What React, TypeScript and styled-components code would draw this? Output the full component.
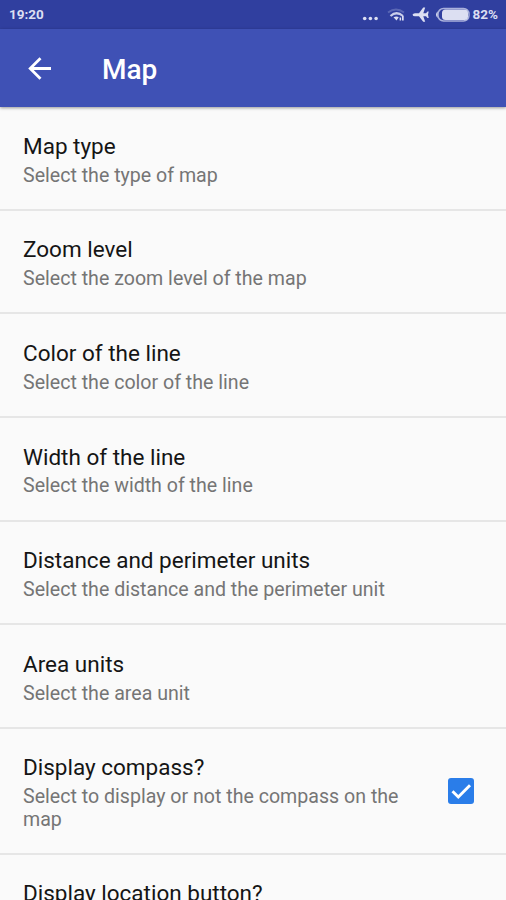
import React from "react";
import styled, { createGlobalStyle } from "styled-components";

const GlobalStyle = createGlobalStyle`
  html, body { margin: 0; height: 100%; overflow: hidden; background: #fafafa; }
  * { box-sizing: border-box; }
`;

const Screen = styled.div`
  width: 506px;
  height: 900px;
  overflow: hidden;
  display: flex;
  flex-direction: column;
  background: #fafafa;
  font-family: Roboto, "Noto Sans", sans-serif;
`;

const StatusBar = styled.div`
  flex: none;
  height: 28.5px;
  padding: 0 8px 0 9px;
  display: flex;
  align-items: center;
  justify-content: space-between;
  background: #303f9f;
  color: #dcdff2;
  font-size: 13.5px;
  font-weight: 700;
`;

const StatusIcons = styled.div`
  display: flex;
  align-items: center;
  gap: 3px;
`;

const AppBar = styled.header`
  flex: none;
  height: 78.5px;
  padding: 2px 22px 0 27px;
  display: flex;
  align-items: center;
  gap: 50px;
  background: #3f51b5;
  box-shadow: 0 1px 3px rgba(0, 0, 0, 0.4);
  z-index: 1;
`;

const BackButton = styled.button`
  border: 0;
  padding: 0;
  width: 25px;
  height: 26px;
  background: none;
  display: flex;
`;

const Heading = styled.h1`
  margin: 2px 0 0;
  color: #fff;
  font-size: 28px;
  line-height: 34px;
  font-weight: 500;
`;

const List = styled.main`
  flex: none;
  padding-top: 0.3px;
`;

const Row = styled.div<{ $tall?: boolean }>`
  height: ${(p) => (p.$tall ? "126px" : "103.6px")};
  padding: 25.5px 32px 0 23px;
  display: flex;
  justify-content: space-between;
  border-bottom: 2px solid #e6e6e6;
`;

const RowText = styled.div`
  width: 395px;
`;

const Title = styled.div`
  color: #151515;
  font-size: 22.5px;
  line-height: 27px;
`;

const Summary = styled.div`
  margin-top: 3.9px;
  color: #757575;
  font-size: 19.6px;
  line-height: 23px;
`;

const Checkbox = styled.div`
  flex: none;
  margin-top: 24px;
  width: 26px;
  height: 26px;
  border-radius: 3px;
  background: #2a7de9;
  display: flex;
`;

const rows = [
  ["Map type", "Select the type of map"],
  ["Zoom level", "Select the zoom level of the map"],
  ["Color of the line", "Select the color of the line"],
  ["Width of the line", "Select the width of the line"],
  ["Distance and perimeter units", "Select the distance and the perimeter unit"],
  ["Area units", "Select the area unit"],
];

function Indicators() {
  return (
    <svg width="108" height="20" viewBox="0 0 108 20" fill="#dcdff2">
      <circle cx="2.7" cy="14.5" r="1.8" />
      <circle cx="8.4" cy="14.5" r="1.8" />
      <circle cx="14.1" cy="14.5" r="1.8" />
      <g fill="none" strokeWidth="1.8">
        <path d="M26 8.5Q34 2.5 42 8.5" stroke="#5a67b4" />
        <path d="M28.5 12Q34.5 6.5 41 12" stroke="#c9ceea" strokeWidth="2.2" />
      </g>
      <path d="M31.5 13.3Q34.5 11.5 36.8 13.3L34.500 16.500z" />
      <path d="M37.6 13.500h1.500v3H37.600zM40 12h1.700v4.500h-1.700z" />
      <path d="M50.5 10.800Q51 9.300 53 9.300H57L61.200 3.500H63.200L61.300 9.300H64L65.500 7.500H66.700L66 10.800L66.700 14H65.500L64 12.300H61.300L63.200 17.800H61.200L57 12.300H53Q51 12.300 50.500 10.800z" />
      <rect x="76" y="4.500" width="31" height="12.500" rx="5.500" fill="none" stroke="#aab1dc" strokeWidth="1.5" />
      <rect x="80" y="5.500" width="26" height="10.500" rx="3.500" />
      <path d="M75.500 7.500Q72.500 10.700 75.500 14z" />
    </svg>
  );
}

export default function App() {
  return (
    <Screen>
      <GlobalStyle />
      <StatusBar>
        <span>19:20</span>
        <StatusIcons>
          <Indicators />
          <span>82%</span>
        </StatusIcons>
      </StatusBar>
      <AppBar>
        <BackButton aria-label="Back">
          <svg width="25" height="26" viewBox="0 0 25 26" fill="none" stroke="#fff" strokeWidth="2.8">
            <path d="M24 12.5H3.5M13.5 2.2L3.2 12.5L13.5 22.8" />
          </svg>
        </BackButton>
        <Heading>Map</Heading>
      </AppBar>
      <List>
        {rows.map(([title, summary]) => (
          <Row key={title}>
            <RowText>
              <Title>{title}</Title>
              <Summary>{summary}</Summary>
            </RowText>
          </Row>
        ))}
        <Row $tall>
          <RowText>
            <Title>Display compass?</Title>
            <Summary>Select to display or not the compass on the map</Summary>
          </RowText>
          <Checkbox role="checkbox" aria-checked="true">
            <svg width="26" height="26" viewBox="0 0 26 26" fill="none" stroke="#fff" strokeWidth="2.9">
              <path d="M4.5 13.2L10.3 19L22 7.2" />
            </svg>
          </Checkbox>
        </Row>
        <Row>
          <RowText>
            <Title>Display location button?</Title>
          </RowText>
        </Row>
      </List>
    </Screen>
  );
}
